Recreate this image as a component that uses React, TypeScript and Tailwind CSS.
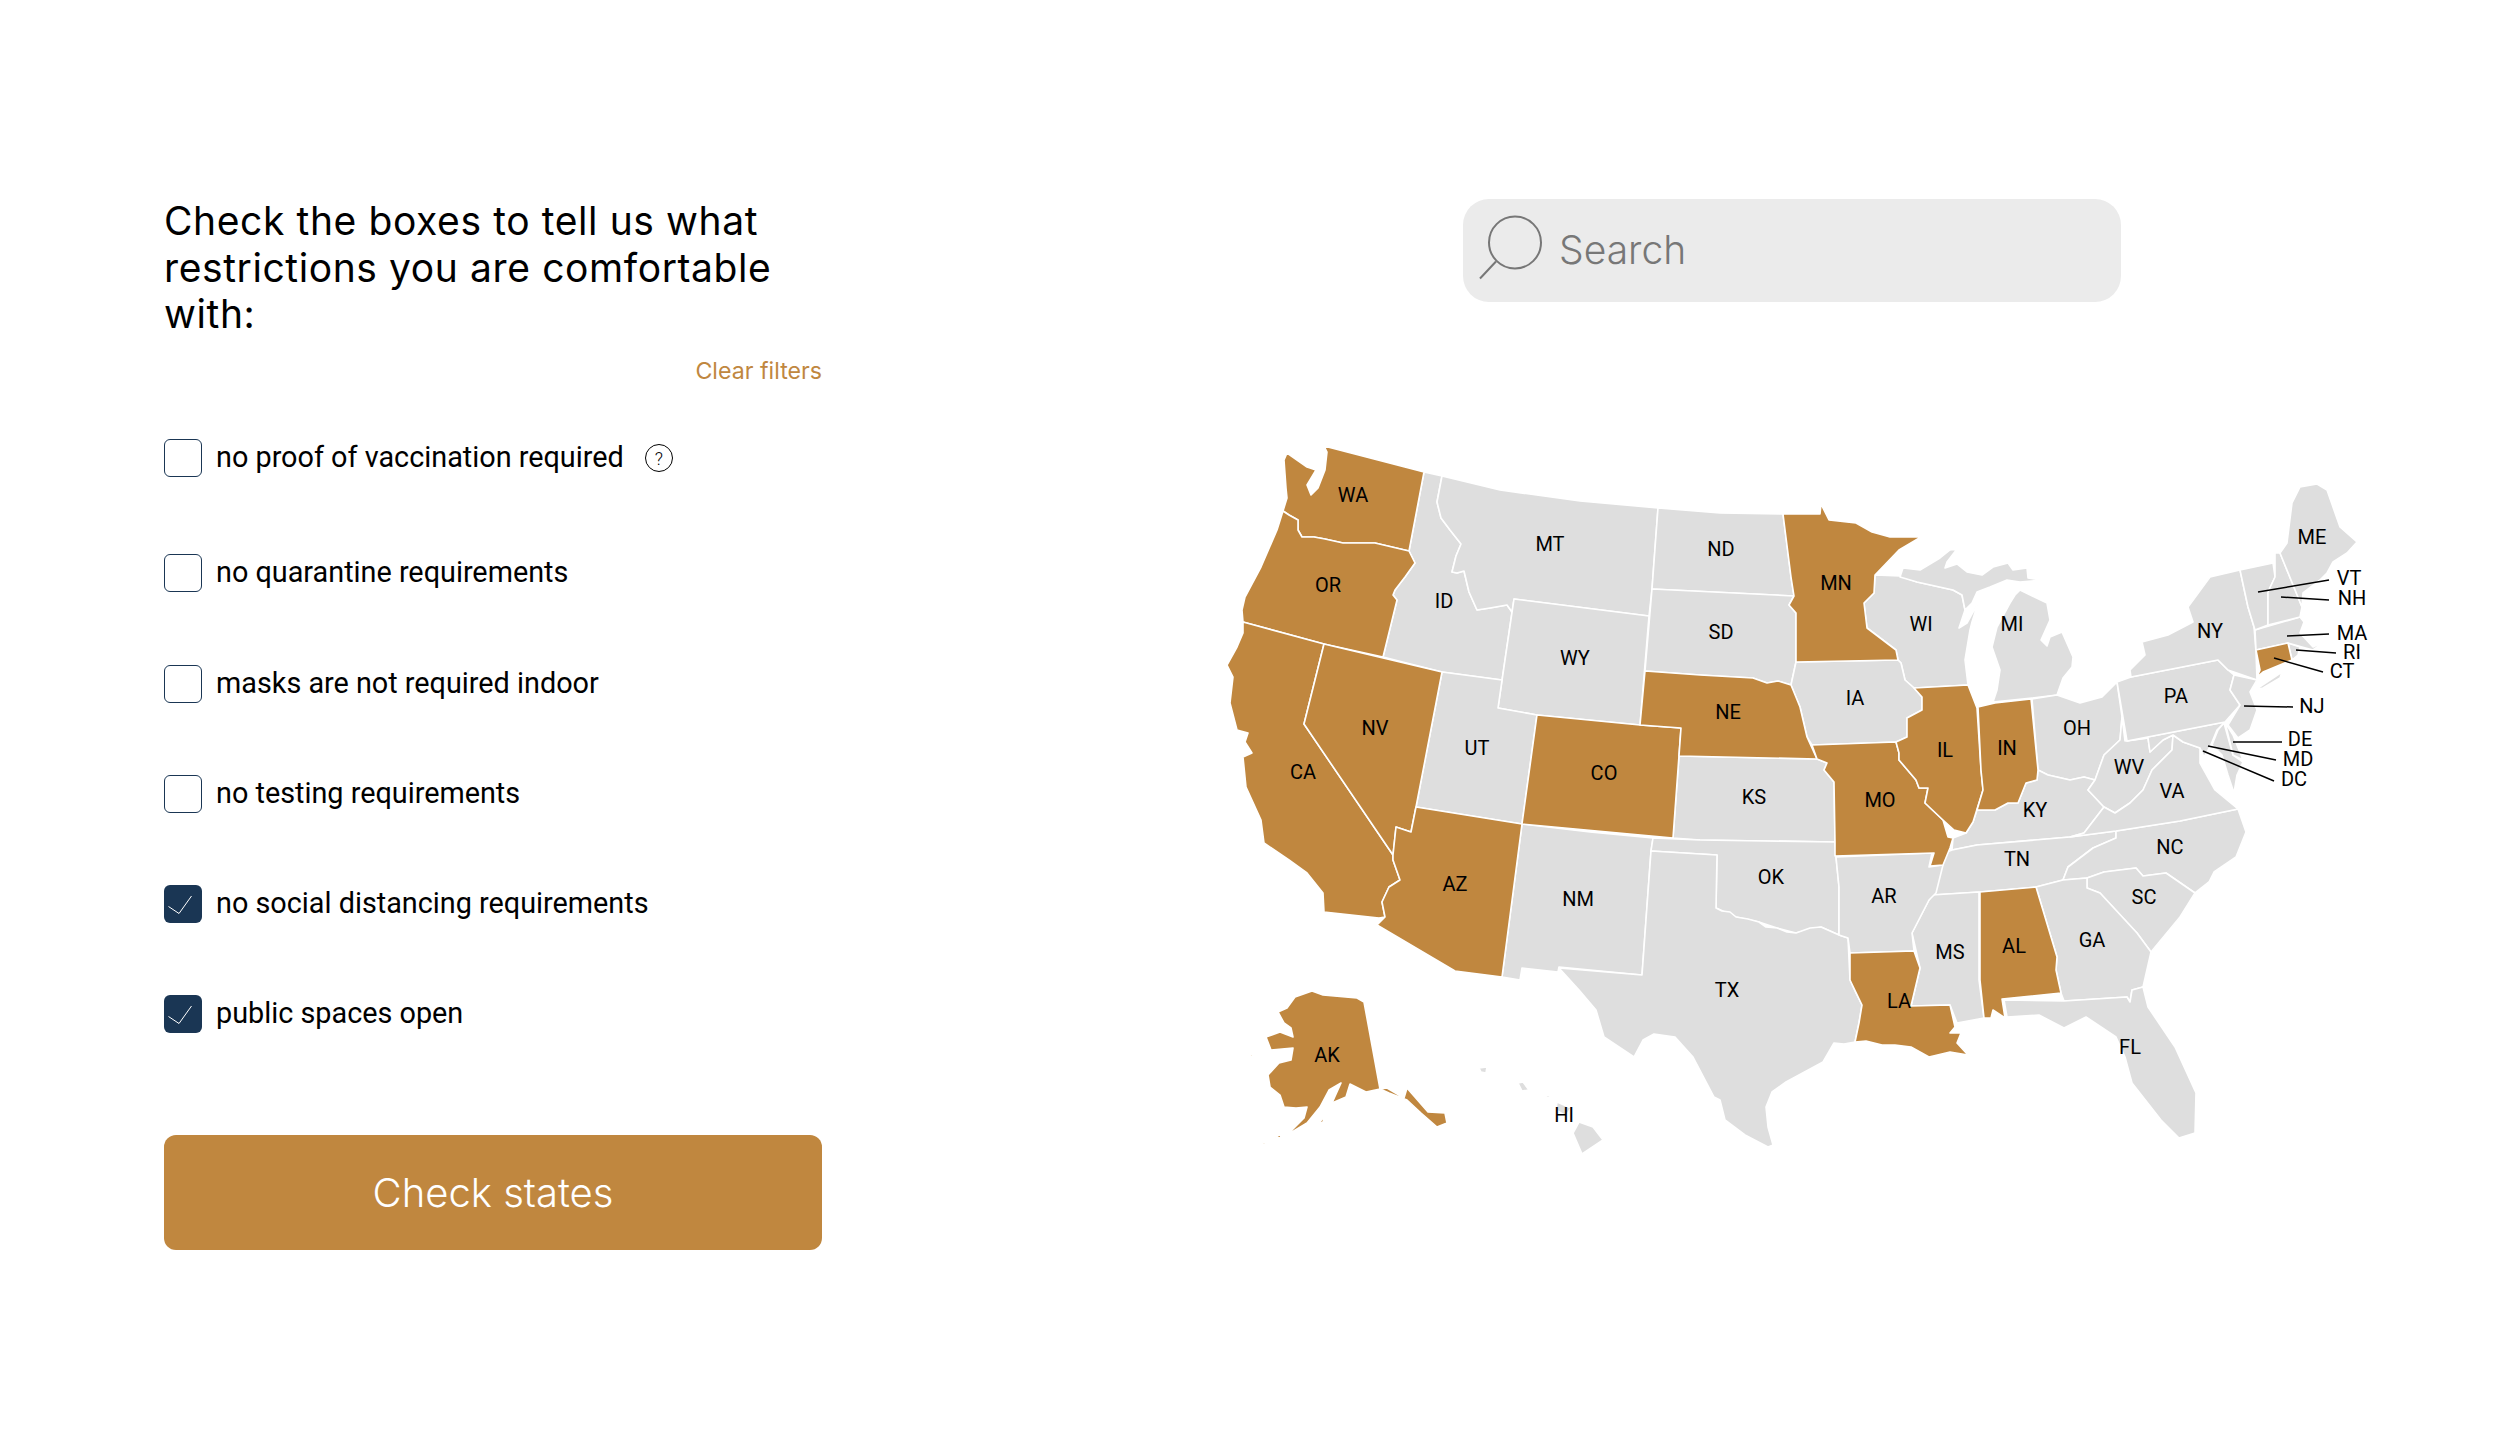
const GOLD = '#c0873f';
const GREY = '#dedede';

// state shapes, in page pixels (the svg viewBox starts at 1120,420)
const states: { id: string; on?: boolean; pts: string }[] = [
  { id: 'ID', pts: '1424,472 1442,476 1437,502 1441,518 1450,530 1461,544 1456,556 1452,572 1457,573 1464,571 1469,592 1477,610 1490,608 1507,605 1512,612 1502,680 1442,672 1383,657 1397,600 1393,595 1395,590 1405,577 1415,563 1409,551' },
  { id: 'MT', pts: '1442,476 1500,490 1580,501 1658,508 1652,589 1649,616 1514,599 1512,612 1507,605 1490,608 1477,610 1469,592 1464,571 1457,573 1452,572 1456,556 1461,544 1450,530 1441,518 1437,502' },
  { id: 'WY', pts: '1514,599 1649,616 1640,725 1537,715 1498,708' },
  { id: 'UT', pts: '1442,672 1502,680 1498,708 1537,715 1522,824 1416,807' },
  { id: 'NM', pts: '1522,824 1590,832 1653,838 1651,851 1642,975 1559,967 1558,972 1522,968 1520,980 1502,977' },
  { id: 'ND', pts: '1658,508 1720,513 1783,514 1787,545 1791,577 1794,596 1652,589' },
  { id: 'SD', pts: '1652,589 1794,596 1789,605 1796,613 1796,662 1791,685 1778,681 1767,683 1753,678 1700,675 1645,671' },
  { id: 'KS', pts: '1679,756 1817,759 1827,763 1824,770 1834,782 1835,842 1700,840 1673,838' },
  { id: 'OK', pts: '1653,838 1700,840 1835,842 1836,857 1839,887 1839,935 1821,927 1796,933 1777,928 1759,922 1736,917 1716,908 1717,855 1651,851' },
  { id: 'TX', pts: '1651,851 1717,855 1716,908 1722,911 1730,912 1736,917 1748,919 1759,922 1766,927 1777,928 1787,932 1796,933 1810,928 1821,927 1839,935 1848,938 1850,980 1856,993 1862,1005 1859,1023 1855,1042 1844,1044 1834,1043 1823,1062 1786,1082 1772,1092 1766,1107 1768,1127 1773,1145 1768,1147 1745,1135 1725,1120 1720,1100 1714,1097 1693,1057 1675,1037 1654,1034 1643,1040 1634,1057 1604,1037 1596,1010 1579,990 1559,968 1642,975' },
  { id: 'WI', pts: '1875,575 1900,576 1917,582 1953,590 1962,595 1965,610 1959,628 1967,623 1978,603 1972,622 1970,630 1965,660 1968,685 1914,688 1905,680 1901,663 1898,660 1896,650 1867,628 1864,603 1874,593' },
  { id: 'MI-U', pts: '1900,577 1903,568 1920,570 1940,558 1950,550 1957,549 1947,562 1945,568 1957,564 1967,572 1982,575 1993,567 2008,563 2013,570 2027,568 2028,578 2042,580 2020,582 2007,580 1990,587 1977,592 1972,603 1965,610 1962,595 1953,590 1917,582' },
  { id: 'MI', pts: '1993,702 2032,698 2057,695 2063,678 2072,667 2073,657 2062,632 2050,637 2047,646 2041,640 2050,620 2047,603 2020,590 2015,595 2010,603 1997,627 1992,647 2000,670 1997,690' },
  { id: 'IA', pts: '1796,662 1898,660 1901,663 1905,680 1914,688 1922,697 1922,710 1907,718 1907,737 1896,742 1812,745 1807,737 1800,707 1791,685' },
  { id: 'OH', pts: '2032,699 2057,695 2080,703 2102,697 2117,682 2122,717 2120,740 2104,755 2095,780 2084,777 2070,780 2048,775 2038,770' },
  { id: 'KY', pts: '2038,770 2048,775 2070,780 2084,777 2095,780 2088,790 2104,807 2084,833 2070,837 1977,845 1952,850 1953,838 1966,833 1973,822 1977,810 1995,810 2008,803 2018,803 2026,783 2037,780' },
  { id: 'TN', pts: '1977,845 2070,837 2116,831 2116,838 2093,848 2068,867 2063,880 2036,887 1980,892 1932,895 1939,873 1947,852 1952,850' },
  { id: 'NC', pts: '2116,831 2180,821 2238,809 2246,832 2236,857 2214,872 2209,882 2195,893 2166,873 2143,876 2136,868 2104,872 2087,878 2063,880 2068,867 2093,848 2116,838' },
  { id: 'SC', pts: '2087,878 2104,872 2136,868 2143,876 2166,873 2195,893 2180,917 2151,952 2137,933 2100,893 2087,888' },
  { id: 'GA', pts: '2036,887 2063,880 2087,878 2087,888 2100,893 2137,933 2151,952 2143,987 2132,990 2130,1002 2127,997 2064,1001 2061,993 2056,970 2057,957' },
  { id: 'MS', pts: '1932,895 1979,892 1979,980 1984,1018 1957,1023 1950,1005 1911,1006 1920,968 1912,933 1929,900' },
  { id: 'AR', pts: '1836,857 1932,853 1929,867 1943,865 1936,893 1929,900 1912,933 1914,951 1850,953 1848,938 1839,935 1839,887' },
  { id: 'FL', pts: '2004,1000 2064,1001 2127,997 2130,1002 2132,990 2143,987 2148,1007 2175,1047 2196,1093 2195,1133 2179,1138 2161,1120 2132,1083 2125,1057 2116,1037 2086,1017 2064,1028 2039,1015 2007,1017' },
  { id: 'WV', pts: '2122,717 2125,741 2148,738 2150,752 2163,740 2173,735 2172,750 2152,770 2143,790 2130,803 2115,813 2104,807 2088,790 2095,780 2104,755 2120,740' },
  { id: 'VA', pts: '2172,750 2173,735 2183,742 2200,748 2200,763 2215,790 2238,809 2180,821 2116,831 2070,837 2084,833 2104,807 2115,813 2130,803 2143,790 2152,770' },
  { id: 'MD', pts: '2127,741 2225,722 2217,730 2210,747 2204,757 2200,748 2183,742 2173,735 2163,740 2150,752 2148,738' },
  { id: 'MD-E', pts: '2224,723 2233,755 2243,762 2237,775 2234,793 2228,775 2222,755 2212,745 2218,730' },
  { id: 'DE', pts: '2225,722 2233,735 2243,760 2233,755' },
  { id: 'PA', pts: '2117,682 2131,677 2218,660 2228,670 2234,675 2230,690 2240,705 2225,722 2127,741' },
  { id: 'NY', pts: '2240,570 2210,577 2188,607 2193,622 2168,635 2142,642 2145,655 2130,670 2131,677 2218,660 2228,670 2257,680 2256,652 2254,627 2248,607' },
  { id: 'LI', pts: '2255,690 2282,672 2280,678 2263,688' },
  { id: 'NJ', pts: '2234,675 2257,680 2250,692 2257,710 2250,730 2238,738 2228,725 2240,705 2230,690' },
  { id: 'RI', pts: '2288,643 2300,647 2298,655 2292,660' },
  { id: 'MA', pts: '2255,630 2300,617 2304,622 2300,633 2313,647 2327,640 2313,650 2302,647 2288,643 2256,650' },
  { id: 'VT', pts: '2240,570 2273,563 2275,577 2268,592 2268,625 2255,630 2248,607' },
  { id: 'NH', pts: '2275,553 2280,553 2302,607 2300,617 2268,625 2268,592 2275,577' },
  { id: 'ME', pts: '2280,553 2287,543 2292,503 2300,487 2317,484 2327,490 2340,527 2357,542 2347,553 2333,562 2327,573 2320,580 2303,593 2302,607' },
  { id: 'HI-1', pts: '1579,1122 1593,1127 1603,1140 1582,1154 1573,1133' },
  { id: 'HI-2', pts: '1557,1102 1571,1108 1566,1116 1556,1110' },
  { id: 'HI-3', pts: '1541,1095 1553,1096 1548,1098' },
  { id: 'HI-4', pts: '1518,1083 1523,1082 1529,1090 1522,1091' },
  { id: 'HI-5', pts: '1479,1068 1487,1067 1486,1073 1481,1072' },

  { id: 'WA', on: true, pts: '1324,446 1424,472 1409,551 1375,543 1343,543 1325,539 1314,537 1302,537 1298,530 1298,520 1289,515 1283,511 1287,498 1286,488 1284,460 1287,453 1307,467 1316,470 1307,485 1311,495 1318,488 1325,470 1327,452' },
  { id: 'OR', on: true, pts: '1283,511 1289,515 1298,520 1298,530 1302,537 1314,537 1325,539 1343,543 1375,543 1409,551 1415,563 1405,577 1395,590 1393,595 1397,600 1383,657 1324,644 1243,622 1242,610 1245,597 1261,567 1277,530' },
  { id: 'CA', on: true, pts: '1243,622 1324,644 1304,724 1393,855 1393,860 1400,880 1389,887 1382,902 1385,917 1379,918 1324,912 1323,893 1307,873 1289,860 1264,843 1261,820 1246,787 1243,757 1252,753 1245,742 1248,733 1237,730 1230,703 1233,677 1227,665 1237,647 1243,633' },
  { id: 'NV', on: true, pts: '1324,644 1442,672 1416,807 1411,832 1396,827 1393,855 1304,724' },
  { id: 'AZ', on: true, pts: '1416,807 1522,824 1502,977 1455,971 1377,925 1385,917 1382,902 1389,887 1400,880 1393,860 1393,855 1396,827 1411,832' },
  { id: 'CO', on: true, pts: '1537,715 1640,725 1681,728 1673,838 1522,824' },
  { id: 'NE', on: true, pts: '1645,671 1700,675 1753,678 1767,683 1778,681 1791,685 1800,707 1807,737 1817,759 1679,756 1681,728 1640,725' },
  { id: 'MN', on: true, pts: '1783,514 1820,514 1821,504 1829,520 1856,523 1872,532 1890,537 1921,537 1899,550 1875,575 1874,593 1864,603 1867,628 1896,650 1898,660 1796,662 1796,613 1789,605 1794,596 1791,577' },
  { id: 'MO', on: true, pts: '1812,745 1896,742 1899,753 1899,760 1916,780 1919,788 1928,788 1925,803 1943,820 1948,837 1953,838 1950,848 1943,865 1930,866 1934,853 1835,856 1835,842 1834,782 1824,770 1827,763 1817,759' },
  { id: 'IL', on: true, pts: '1914,688 1968,685 1977,708 1981,770 1983,790 1973,822 1966,833 1954,830 1943,820 1925,803 1928,788 1919,788 1916,780 1899,760 1899,753 1896,742 1907,737 1907,718 1922,710 1922,697' },
  { id: 'IN', on: true, pts: '1978,707 1995,703 2031,699 2038,770 2037,780 2026,783 2018,803 2008,803 1995,810 1977,810 1983,790 1981,770' },
  { id: 'AL', on: true, pts: '1980,892 2036,887 2057,957 2056,970 2061,993 2002,999 2005,1018 1993,1010 1991,1018 1984,1018 1980,980' },
  { id: 'LA', on: true, pts: '1850,953 1914,951 1920,968 1911,1006 1950,1005 1955,1027 1950,1033 1961,1033 1957,1043 1968,1055 1950,1052 1929,1057 1911,1047 1895,1045 1882,1045 1866,1041 1855,1042 1859,1023 1862,1005 1850,980' },
  { id: 'CT', on: true, pts: '2256,650 2288,643 2292,660 2263,672 2257,677 2260,670' },
  { id: 'AK', on: true, pts: '1312,991 1323,995 1357,998 1364,1002 1380,1089 1366,1092 1350,1084 1346,1097 1332,1103 1341,1083 1329,1090 1320,1107 1307,1123 1287,1135 1304,1118 1307,1107 1296,1108 1284,1107 1280,1095 1270,1087 1268,1075 1279,1063 1291,1060 1293,1048 1271,1050 1266,1037 1280,1032 1293,1037 1291,1028 1284,1023 1278,1012 1287,1008 1295,997' },
  { id: 'AK-P', on: true, pts: '1380,1089 1387,1088 1404,1098 1407,1088 1428,1112 1445,1113 1447,1123 1437,1127 1421,1113 1407,1100 1389,1093' },
  { id: 'AK-3', on: true, pts: '1259,1089 1264,1091 1262,1092' },
  { id: 'AK-4', on: true, pts: '1246,1053 1252,1055 1254,1059' },
  { id: 'AK-5', on: true, pts: '1318,1124 1325,1116 1323,1122' },
  { id: 'AK-6', on: true, pts: '1275,1137 1282,1134 1280,1138' },
  { id: 'AK-7', on: true, pts: '1262,1143 1267,1142 1264,1145' },
];

const labels: [string, number, number][] = [
  ['WA', 1353, 495], ['OR', 1328, 585], ['ID', 1444, 601], ['MT', 1550, 544], ['ND', 1721, 549],
  ['SD', 1721, 632], ['WY', 1575, 658], ['NV', 1375, 728], ['CA', 1303, 772], ['UT', 1477, 748],
  ['CO', 1604, 773], ['NE', 1728, 712], ['KS', 1754, 797], ['AZ', 1455, 884], ['NM', 1578, 899],
  ['OK', 1771, 877], ['TX', 1727, 990], ['MN', 1836, 583], ['WI', 1921, 624], ['MI', 2012, 624],
  ['IA', 1855, 698], ['IL', 1945, 750], ['IN', 2007, 748], ['OH', 2077, 728], ['MO', 1880, 800],
  ['KY', 2035, 810], ['TN', 2017, 859], ['AR', 1884, 896], ['MS', 1950, 952], ['AL', 2014, 946],
  ['GA', 2092, 940], ['SC', 2144, 897], ['NC', 2170, 847], ['VA', 2172, 791], ['WV', 2129, 767],
  ['PA', 2176, 696], ['NY', 2210, 631], ['ME', 2312, 537], ['VT', 2349, 578], ['NH', 2352, 598],
  ['MA', 2352, 633], ['RI', 2352, 652], ['CT', 2342, 671], ['NJ', 2312, 706], ['DE', 2300, 739],
  ['MD', 2298, 759], ['DC', 2294, 779], ['LA', 1899, 1001], ['FL', 2130, 1047], ['AK', 1327, 1055],
  ['HI', 1564, 1115],
];

const leaders = [
  '2329,580 2258,592', '2329,600 2281,597', '2329,634 2287,636', '2336,653 2296,650', '2323,672 2274,658',
  '2293,707 2244,706', '2282,742 2233,742', '2276,760 2208,746', '2274,781 2203,751',
];

const filters = [
  { label: 'no proof of vaccination required', help: true },
  { label: 'no quarantine requirements' },
  { label: 'masks are not required indoor' },
  { label: 'no testing requirements' },
  { label: 'no social distancing requirements', checked: true },
  { label: 'public spaces open', checked: true },
];

function Checkbox({ checked }: { checked?: boolean }) {
  return (
    <span
      className={
        checked
          ? 'flex h-[38px] w-[38px] shrink-0 items-center justify-center rounded-[6px] bg-[#1a3654]'
          : 'flex h-[38px] w-[38px] shrink-0 items-center justify-center rounded-[6px] border border-[#1a3654] bg-white'
      }
    >
      {checked && (
        <svg width="38" height="38" viewBox="0 0 38 38" fill="none">
          <path d="M4.5 21.5 L15 28.5 L27.5 11" stroke="#ffffff" strokeWidth="1" />
        </svg>
      )}
    </span>
  );
}

function UsMap() {
  return (
    <svg viewBox="1120 420 1280 760" width="1280" height="760" className="mt-[118px] block">
      {states.map((s) => (
        <polygon key={s.id} points={s.pts} fill={s.on ? GOLD : GREY} stroke="#ffffff" strokeWidth="1.6" strokeLinejoin="round" />
      ))}
      {leaders.map((l) => (
        <polyline key={l} points={l} fill="none" stroke="#000000" strokeWidth="1.5" />
      ))}
      {labels.map(([t, x, y]) => (
        <text key={t} x={x} y={y + 7} textAnchor="middle" fontSize="20" fill="#000000" fontFamily="Roboto, sans-serif">
          {t}
        </text>
      ))}
    </svg>
  );
}

export default function App() {
  return (
    <div className="flex min-h-[1444px] bg-white pt-[199px] font-['Roboto',sans-serif] text-black">
      {/* Filters */}
      <div className="ml-[164px] flex w-[658px] flex-col">
        <h1 className="-mt-[1px] font-['Inter',sans-serif] text-[39px] leading-[46.5px] font-normal tracking-[0.6px]">
          Check the boxes to tell us what
          <br />
          restrictions you are comfortable
          <br />
          with:
        </h1>
        <button className="mt-[20px] self-end font-['Inter',sans-serif] text-[23.2px] leading-[26px] text-[#c0873f]">
          Clear filters
        </button>
        <div className="mt-[55.5px] flex flex-col gap-[72.3px]">
          {filters.map((f, i) => (
            <label key={f.label} className={i === 0 ? 'mb-[5px] flex h-[38px] items-center gap-[14px]' : 'flex h-[38px] items-center gap-[14px]'}>
              <Checkbox checked={f.checked} />
              <span className="pb-[2px] text-[28.8px] leading-[38px]">{f.label}</span>
              {f.help && (
                <span className="ml-[7px] flex h-[28px] w-[28px] items-center justify-center rounded-full border border-black text-[18px] font-light text-black">
                  ?
                </span>
              )}
            </label>
          ))}
        </div>
        <button className="mt-[102px] h-[115px] rounded-[12px] bg-[#c0873f] font-['Inter',sans-serif] text-[40px] font-light text-white">
          Check states
        </button>
      </div>

      {/* Search + map */}
      <div className="ml-[298px] w-[1280px]">
        <div className="ml-[343px] flex h-[103px] w-[658px] items-center rounded-[26px] bg-[#ebebeb] pl-[16px]">
          <svg width="64" height="72" viewBox="0 0 64 72" fill="none" className="shrink-0">
            <ellipse cx="36" cy="27.5" rx="26" ry="26" stroke="#777777" strokeWidth="2" />
            <path d="M17 46.5 L1 63.5" stroke="#777777" strokeWidth="2" />
          </svg>
          <span className="ml-[16px] font-['Inter',sans-serif] text-[39px] font-light text-[#777777]">Search</span>
        </div>
        <UsMap />
      </div>
    </div>
  );
}
